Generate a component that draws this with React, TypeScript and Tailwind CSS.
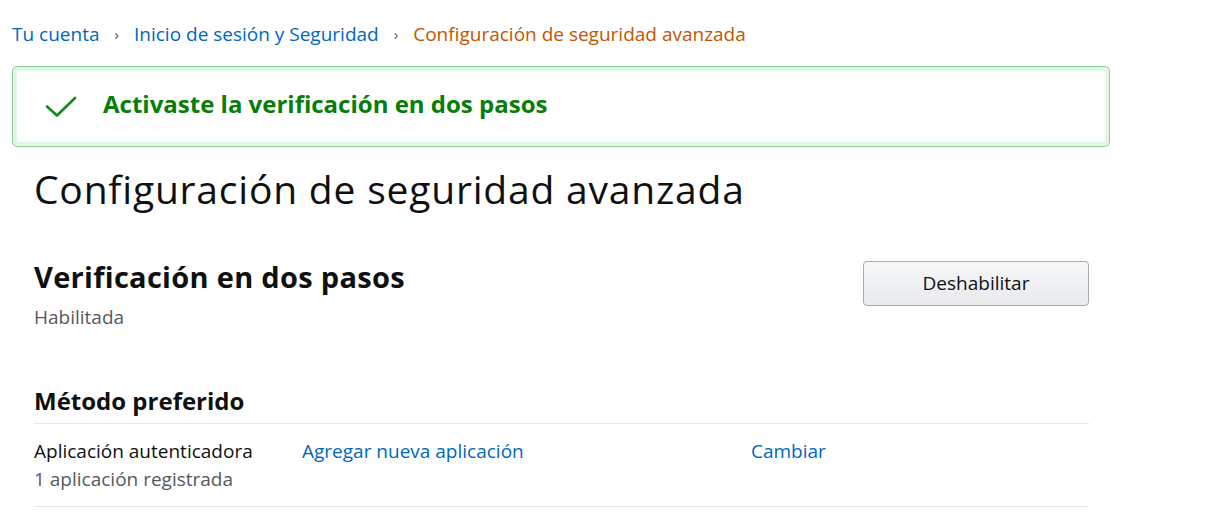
const font = { fontFamily: '"Open Sans", "Liberation Sans", Arial, sans-serif' };

function CheckMark() {
  return (
    <svg width="32" height="22" viewBox="0 0 32 22" fill="none" className="shrink-0">
      <polyline
        points="2,10.5 12,19.5 30,2"
        stroke="#138a13"
        strokeWidth="2.6"
        strokeLinecap="round"
        strokeLinejoin="round"
      />
    </svg>
  );
}

function Breadcrumb() {
  return (
    <nav className="flex items-center h-[66px] pt-[2px] text-[19px] leading-none">
      <a className="text-[#0066c0]">Tu cuenta</a>
      <span className="mx-[15px] text-[#555] text-[15px]">›</span>
      <a className="text-[#0066c0]">Inicio de sesión y Seguridad</a>
      <span className="mx-[15px] text-[#555] text-[15px]">›</span>
      <span className="text-[#c45500]">Configuración de seguridad avanzada</span>
    </nav>
  );
}

function SuccessAlert() {
  return (
    <div className="w-[1098px] rounded-[5px] border border-[#8ccf98] p-[4px] bg-[#e3f6e3]">
      <div className="flex items-center h-[71px] bg-white rounded-[2px] pl-[28px]">
        <CheckMark />
        <span className="ml-[26px] -mt-[5px] text-[24px] font-bold text-[#067d06]">
          Activaste la verificación en dos pasos
        </span>
      </div>
    </div>
  );
}

export default function App() {
  return (
    <div className="bg-white min-h-[523px] px-3 text-[#0f1111]" style={font}>
      <Breadcrumb />
      <SuccessAlert />
      <div className="w-[1077px] pl-[22px]">
        <h1 className="mt-[17px] text-[39px] leading-[50px] tracking-[0.8px] font-normal text-[#0f1111]">
          Configuración de seguridad avanzada
        </h1>

        <div className="flex justify-between mt-[45px]">
          <div>
            <h2 className="text-[29px] leading-[36px] tracking-[0.3px] font-bold">Verificación en dos pasos</h2>
            <div className="mt-[8px] text-[19px] text-[#565959]">Habilitada</div>
          </div>
          <button className="mt-[2px] w-[226px] h-[45px] rounded-[4px] border border-[#a8abb0] bg-gradient-to-b from-[#f7f8fa] to-[#e7e9ec] text-[19px] text-[#0f1111]">
            Deshabilitar
          </button>
        </div>

        <h3 className="mt-[54px] text-[24px] leading-[30px] font-bold">Método preferido</h3>
        <div className="mt-[7px] border-t border-[#e7e7e7] border-b">
          <div className="flex pt-[13px] pb-[13px] text-[19px] leading-[28px]">
            <div className="w-[268px]">
              <div>Aplicación autenticadora</div>
              <div className="text-[#565959]">1 aplicación registrada</div>
            </div>
            <a className="w-[449px] text-[#0066c0]">Agregar nueva aplicación</a>
            <a className="text-[#0066c0]">Cambiar</a>
          </div>
        </div>
      </div>
    </div>
  );
}
